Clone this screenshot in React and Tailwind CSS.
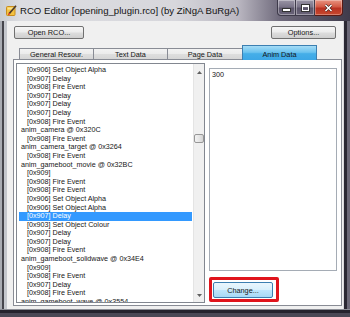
const items = [
  [1, '[0x906] Set Object Alpha'],
  [1, '[0x907] Delay'],
  [1, '[0x908] Fire Event'],
  [1, '[0x907] Delay'],
  [1, '[0x907] Delay'],
  [1, '[0x907] Delay'],
  [1, '[0x908] Fire Event'],
  [0, 'anim_camera @ 0x320C'],
  [1, '[0x908] Fire Event'],
  [0, 'anim_camera_target @ 0x3264'],
  [1, '[0x908] Fire Event'],
  [0, 'anim_gameboot_movie @ 0x32BC'],
  [1, '[0x909]'],
  [1, '[0x908] Fire Event'],
  [1, '[0x908] Fire Event'],
  [1, '[0x906] Set Object Alpha'],
  [1, '[0x906] Set Object Alpha'],
  [1, '[0x907] Delay', true],
  [1, '[0x903] Set Object Colour'],
  [1, '[0x907] Delay'],
  [1, '[0x907] Delay'],
  [1, '[0x908] Fire Event'],
  [0, 'anim_gameboot_solidwave @ 0x34E4'],
  [1, '[0x909]'],
  [1, '[0x908] Fire Event'],
  [1, '[0x907] Delay'],
  [1, '[0x908] Fire Event'],
  [0, 'anim_gameboot_wave @ 0x3554'],
];

function WinButton({ w, children }) {
  return (
    <div
      className={`${w} h-[13px] flex items-center justify-center rounded-[2px] border border-[#707070] bg-[linear-gradient(180deg,#f6f6f6_0%,#ebebeb_48%,#dddddd_52%,#cfcfcf_100%)] text-[7.4px] leading-[9px] text-[#161616]`}
    >
      {children}
    </div>
  );
}

function Tab({ w, children }) {
  return (
    <div
      className={`${w} h-[11px] flex items-center justify-center border border-b-0 border-[#898c95] -ml-px first:ml-0 bg-[linear-gradient(180deg,#f3f3f3_0%,#ebebeb_50%,#dedede_51%,#d6d6d6_100%)] text-[7.3px] leading-[9px]`}
    >
      {children}
    </div>
  );
}

export default function App() {
  return (
    <div className="relative w-[350px] h-[317px] overflow-hidden bg-[linear-gradient(90deg,#b9bcc3_0%,#b3b4bb_50%,#8a8594_72%,#4a4656_86%,#2e2b39_100%)] font-['Liberation_Sans',Arial,sans-serif] text-[#161616]">
      {/* title bar */}
      <div className="flex h-[21px] items-start bg-[linear-gradient(90deg,#c9ccd1_0%,#dcdde1_6%,#d7d7dc_50%,#bab7c1_68%,#6f6a7c_80%,#3f3b4b_100%)]">
        <div className="mt-[5px] ml-[6px] w-[11px] h-[11px]">
          <svg width="11" height="11" viewBox="0 0 11 11">
            <rect x="0.5" y="1.5" width="8.5" height="9" rx="1" fill="#f4c241" stroke="#c98d1c" />
            <rect x="1.5" y="2.5" width="6.5" height="2" fill="#fbe38a" />
            <path d="M10 0.8 L3.2 8.6" stroke="#4b3a2a" strokeWidth="1.6" />
            <path d="M3.6 8.2 L2.4 9.8" stroke="#d8342a" strokeWidth="1.4" />
          </svg>
        </div>
        <div className="ml-[3px] mt-[5px] text-[9.6px] leading-[11px] text-[#141414] whitespace-nowrap">
          RCO Editor [opening_plugin.rco] (by ZiNgA BuRgA)
        </div>
        <div className="ml-auto mr-[7px] flex h-[16px]">
          <div className="w-[19px] h-[16px] flex items-center justify-center rounded-bl-[4px] border border-t-0 border-[#3e3a4a] bg-[linear-gradient(180deg,#9a95a6_0%,#7a7488_45%,#5c566b_55%,#6a6479_100%)] shadow-[inset_0_0_0_1px_rgba(255,255,255,0.35)]">
            <div className="mt-[4px] w-[7px] h-[2px] bg-white border border-[#333] box-content" />
          </div>
          <div className="w-[19px] h-[16px] flex items-center justify-center border border-t-0 border-l-0 border-[#3e3a4a] bg-[linear-gradient(180deg,#9a95a6_0%,#7a7488_45%,#5c566b_55%,#6a6479_100%)] shadow-[inset_0_0_0_1px_rgba(255,255,255,0.35)]">
            <div className="w-[7px] h-[6px] border border-t-2 border-white outline outline-[#333]" />
          </div>
          <div className="w-[28px] h-[16px] flex items-center justify-center rounded-br-[4px] border border-t-0 border-l-0 border-[#5a1a14] bg-[linear-gradient(180deg,#e89380_0%,#d35a45_45%,#b83222_55%,#c8492f_100%)] shadow-[inset_0_0_0_1px_rgba(255,255,255,0.3)]">
            <svg width="9" height="8" viewBox="0 0 9 8">
              <path d="M1.5 1 L7.5 7 M7.5 1 L1.5 7" stroke="#3a1a14" strokeWidth="2.6" />
              <path d="M1.5 1 L7.5 7 M7.5 1 L1.5 7" stroke="#ffffff" strokeWidth="1.6" />
            </svg>
          </div>
        </div>
      </div>

      {/* body */}
      <div className="flex h-[288px]">
        <div className="w-[7px] flex">
          <div className="w-[2px] bg-[#a9acb3]" />
          <div className="w-[2px] bg-[#45454c]" />
          <div className="w-[3px] bg-[#c4c7cd]" />
        </div>

        <div className="w-[336px] bg-[#f0f0f0] flex flex-col">
          {/* top buttons */}
          <div className="flex justify-between px-[7px] pt-[5px]">
            <WinButton w="w-[70px]">Open RCO...</WinButton>
            <WinButton w="w-[65px]">Options...</WinButton>
          </div>

          {/* tabs */}
          <div className="mt-[6px] h-[14px] flex items-end pl-[12px]">
            <Tab w="w-[75px]">General Resour.</Tab>
            <Tab w="w-[75px]">Text Data</Tab>
            <Tab w="w-[76px]">Page Data</Tab>
            <div className="relative z-10 -ml-px -mb-px w-[75px] h-[15px] flex items-center justify-center border border-b-0 border-[#3c7fb1] bg-[linear-gradient(180deg,#a6dcf6_0%,#6cc3ef_45%,#45aee8_55%,#3ca7e6_100%)] text-[7.3px] leading-[9px] pt-[2px]">
              Anim Data
            </div>
          </div>

          {/* panel */}
          <div className="ml-[6px] w-[329px] h-[247px] border border-[#898c95] bg-white flex">
            {/* listbox */}
            <div className="ml-[2px] mt-[3px] w-[189px] h-[240px] border border-[#828790] bg-white flex">
              <div className="flex-1 overflow-hidden pt-[2px] pl-[2px] pr-[1px]">
                {items.map(([ind, text, sel], i) => (
                  <div
                    key={i}
                    className={`h-[8.6px] leading-[8.6px] text-[7.2px] whitespace-nowrap ${ind ? 'pl-[8px]' : 'pl-[2px]'} ${sel ? 'bg-[#3399ff] text-white' : 'text-[#161616]'}`}
                  >
                    {text}
                  </div>
                ))}
              </div>
              <div className="w-[11px] bg-[#f0f0f0] border-l border-[#e4e4e4] flex flex-col">
                <div className="h-[16px] flex items-center justify-center">
                  <svg width="5" height="3" viewBox="0 0 5 3">
                    <path d="M0 3 L2.5 0 L5 3 Z" fill="#606060" />
                  </svg>
                </div>
                <div className="h-[54px]" />
                <div className="h-[9px] w-[10px] rounded-[2px] border border-[#979797] bg-[linear-gradient(90deg,#f2f2f2_0%,#e6e6e6_50%,#d4d4d4_100%)]" />
                <div className="flex-1" />
                <div className="h-[13px] flex items-center justify-center">
                  <svg width="5" height="3" viewBox="0 0 5 3">
                    <path d="M0 0 L2.5 3 L5 0 Z" fill="#606060" />
                  </svg>
                </div>
              </div>
            </div>

            {/* right column */}
            <div className="ml-[4px] mt-[8px] flex flex-col">
              <div className="w-[128px] h-[203px] border border-[#a5acb5] bg-white pl-[2px] pt-[1px] text-[7.2px] leading-[9px]">
                300
              </div>
              <div className="mt-[6px] w-[70px] h-[25px] rounded-[2px] border-[3px] border-[#e0141c] pl-[1px] pt-[2px]">
                <div className="w-[60px] h-[16px] flex items-center justify-center rounded-[2px] border border-[#3c7fb1] bg-[linear-gradient(180deg,#eaf6fd_0%,#d9f0fc_48%,#bee6fd_52%,#a7d9f5_100%)] text-[7.3px] leading-[9px]">
                  Change...
                </div>
              </div>
            </div>
          </div>
        </div>

        <div className="w-[7px] flex">
          <div className="w-[1px] bg-[#d8d8dc]" />
          <div className="w-[3px] bg-[#2a2833]" />
          <div className="w-[3px] bg-[#6b6877]" />
        </div>
      </div>

      {/* bottom frame */}
      <div className="h-[8px] flex flex-col">
        <div className="h-[1px] bg-[#8d8f97]" />
        <div className="h-[3px] bg-[#25232d]" />
        <div className="flex-1 bg-[#4a4855]" />
      </div>
    </div>
  );
}
